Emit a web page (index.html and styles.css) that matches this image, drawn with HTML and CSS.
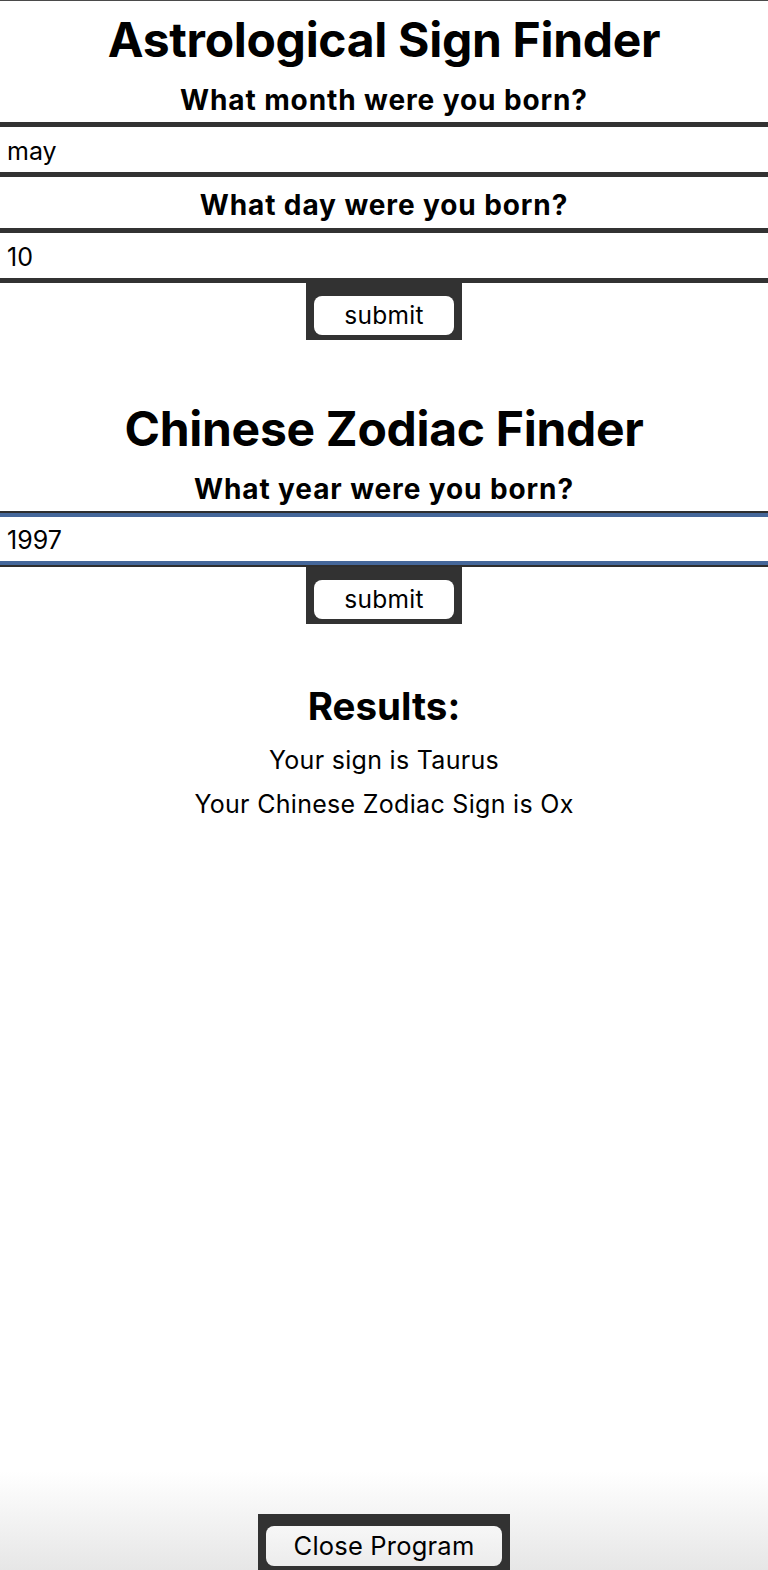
FILE: index.html
```html
<!DOCTYPE html>
<html>
<head>
<meta charset="utf-8">
<link rel="stylesheet" href="styles.css">
</head>
<body>
<div class="app">
  <section class="finder">
    <h1 class="title">Astrological Sign Finder</h1>
    <div class="label label-first">What month were you born?</div>
    <div class="entry">may</div>
    <div class="label label-second">What day were you born?</div>
    <div class="entry">10</div>
    <div class="btn-row"><div class="btn-frame"><div class="btn">submit</div></div></div>
  </section>
  <section class="finder finder-gap">
    <h1 class="title">Chinese Zodiac Finder</h1>
    <div class="label label-first">What year were you born?</div>
    <div class="entry entry-focus">1997</div>
    <div class="btn-row"><div class="btn-frame"><div class="btn">submit</div></div></div>
  </section>
  <section class="results">
    <h2 class="results-title">Results:</h2>
    <p class="result-line">Your sign is Taurus</p>
    <p class="result-line">Your Chinese Zodiac Sign is Ox</p>
  </section>
  <div class="close-row">
    <div class="btn-frame close-frame"><div class="btn close-btn">Close Program</div></div>
  </div>
</div>
</body>
</html>
```
FILE: styles.css
```css
html, body {
  margin: 0;
  padding: 0;
}
body {
  font-family: Inter, "Noto Sans", sans-serif;
  color: #000;
  background: #fff;
}
.app {
  width: 768px;
  height: 1570px;
  box-sizing: border-box;
  border-top: 1px solid #4a4a4a;
  display: flex;
  flex-direction: column;
  background: linear-gradient(to bottom, #ffffff 0, #ffffff 1470px, #e6e6e6 1570px);
}
.finder {
  display: flex;
  flex-direction: column;
}
.finder-gap {
  margin-top: 50px;
}
.title {
  margin: 0;
  height: 77px;
  line-height: 77px;
  font-size: 48px;
  font-weight: 700;
  text-align: center;
  letter-spacing: -0.3px;
}
.label {
  text-align: center;
  font-size: 28px;
  font-weight: 700;
  letter-spacing: 0.9px;
}
.label-first {
  height: 44px;
  line-height: 44px;
}
.label-second {
  height: 51px;
  line-height: 51px;
  box-sizing: border-box;
  padding-top: 5px;
  line-height: 46px;
}
.entry {
  height: 45px;
  box-sizing: content-box;
  line-height: 45px;
  border-top: 5px solid #323232;
  border-bottom: 5px solid #323232;
  padding-left: 7px;
  font-size: 25px;
  padding-top: 0;
}
.entry {
  height: 42px;
  padding-top: 3px;
  line-height: 42px;
}
.entry-focus {
  height: 41px;
  line-height: 41px;
  border-top: 2px solid #2e2e2e;
  border-bottom: 2px solid #2e2e2e;
  box-shadow: inset 0 4px 0 #45679a, inset 0 -4px 0 #45679a;
  padding-top: 7px;
  padding-bottom: 4px;
}
.btn-row {
  display: flex;
  justify-content: center;
}
.btn-frame {
  background: #323232;
  width: 156px;
  box-sizing: border-box;
  padding: 13px 8px 5px;
}
.btn {
  height: 39px;
  line-height: 39px;
  background: #fff;
  border-radius: 8px;
  text-align: center;
  font-size: 24.5px;
  letter-spacing: 0.3px;
}
.results {
  margin-top: 60px;
  text-align: center;
}
.results-title {
  margin: 0 0 10px;
  font-size: 38.5px;
  font-weight: 700;
  line-height: 44px;
}
.result-line {
  margin: 0;
  font-size: 25px;
  letter-spacing: 0.3px;
  line-height: 44px;
}
.close-row {
  margin-top: auto;
  display: flex;
  justify-content: center;
}
.close-frame {
  width: 252px;
  padding: 12px 8px 4px;
}
.close-btn {
  height: 40px;
  line-height: 40px;
  font-size: 25.5px;
  letter-spacing: 0.2px;
  background: linear-gradient(to bottom, #f7f7f7, #ececec);
}
```
